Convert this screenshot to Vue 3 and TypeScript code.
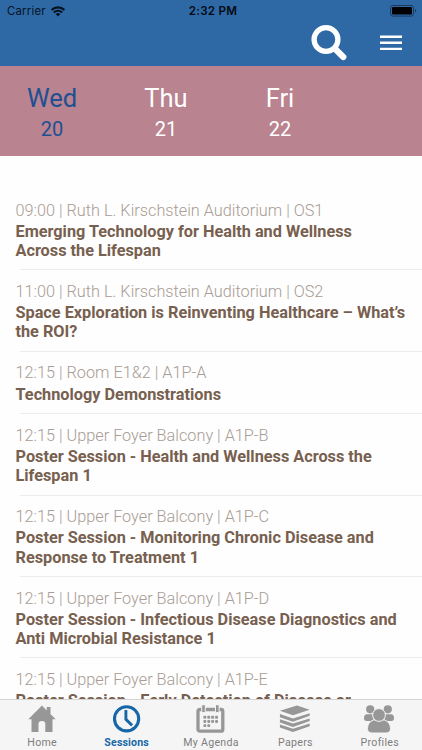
<script setup lang="ts">
interface Session {
  meta: string
  title: string[]
}

const days = [
  { name: 'Wed', date: 20, active: true },
  { name: 'Thu', date: 21, active: false },
  { name: 'Fri', date: 22, active: false },
]

const sessions: Session[] = [
  { meta: '09:00 | Ruth L. Kirschstein Auditorium | OS1', title: ['Emerging Technology for Health and Wellness', 'Across the Lifespan'] },
  { meta: '11:00 | Ruth L. Kirschstein Auditorium | OS2', title: ['Space Exploration is Reinventing Healthcare – What’s', 'the ROI?'] },
  { meta: '12:15 | Room E1&2 | A1P-A', title: ['Technology Demonstrations'] },
  { meta: '12:15 | Upper Foyer Balcony | A1P-B', title: ['Poster Session - Health and Wellness Across the', 'Lifespan 1'] },
  { meta: '12:15 | Upper Foyer Balcony | A1P-C', title: ['Poster Session - Monitoring Chronic Disease and', 'Response to Treatment 1'] },
  { meta: '12:15 | Upper Foyer Balcony | A1P-D', title: ['Poster Session - Infectious Disease Diagnostics and', 'Anti Microbial Resistance 1'] },
  { meta: '12:15 | Upper Foyer Balcony | A1P-E', title: ['Poster Session - Early Detection of Disease or'] },
]

const tabs = ['Home', 'Sessions', 'My Agenda', 'Papers', 'Profiles']
const activeTab = 'Sessions'

const calendarDots = [
  { y: 10.8, xs: [7.4, 11.3, 15.2, 19.1] },
  { y: 15, xs: [7.4, 11.3, 15.2, 19.1] },
  { y: 19.2, xs: [7.4, 11.3] },
]
</script>

<template>
  <div class="screen">
    <header class="header">
      <div class="status">
        <div class="carrier">
          <span>Carrier</span>
          <svg width="14" height="11" viewBox="0 0 14 11">
            <g fill="none" stroke="#06121f" stroke-width="2.1">
              <path d="M.7 3.9a9 9 0 0 1 12.6 0" />
              <path d="M2.9 6.4a5.8 5.8 0 0 1 8.2 0" />
            </g>
            <path d="M4.7 8.1a3.3 3.3 0 0 1 4.6 0L7 10.5z" fill="#06121f" />
          </svg>
        </div>
        <span class="time">2:32 PM</span>
        <svg class="battery" width="27" height="12" viewBox="0 0 27 12">
          <rect x=".5" y=".5" width="23" height="10.6" rx="2.4" fill="none" stroke="#173a5d" />
          <rect x="2" y="2" width="20" height="7.6" rx="1" fill="#000" />
          <path d="M25 4v3.6q1.3-.5 1.3-1.8T25 4z" fill="#173a5d" />
        </svg>
      </div>
      <div class="actions">
        <svg width="36" height="37" viewBox="0 0 36 37" fill="none" stroke="#fff">
          <circle cx="15" cy="15.5" r="11.9" stroke-width="5.3" />
          <path d="M24 24.7l8.300 8.300" stroke-width="6.200" stroke-linecap="round" />
        </svg>
        <svg class="menu" width="22" height="16" viewBox="0 0 22 16" fill="#fff">
          <path d="M0 .5h22v2.4H0zM0 6.6h22v2.4H0zM0 12.7h22v2.4H0z" />
        </svg>
      </div>
    </header>

    <nav class="days">
      <div v-for="d in days" :key="d.date" class="day" :class="{ active: d.active }">
        <span class="name">{{ d.name }}</span>
        <span class="date">{{ d.date }}</span>
      </div>
    </nav>

    <main class="list">
      <article v-for="s in sessions" :key="s.meta" class="session">
        <div class="meta">{{ s.meta }}</div>
        <div v-for="line in s.title" :key="line" class="title">{{ line }}</div>
      </article>
    </main>

    <footer class="tabs">
      <div v-for="t in tabs" :key="t" class="tab" :class="{ active: t === activeTab }">
        <svg v-if="t === 'Home'" width="30" height="28" viewBox="0 0 30 28" fill="currentColor">
          <path d="M15 .5L1.300 14.300h3.200v12.600h7v-8.100q0-2.700 3.400-2.700t3.400 2.700v8.100h7.200V14.300h3.200l-5.200-5.200V2h-3.800v3.400z" />
        </svg>
        <svg v-else-if="t === 'Sessions'" width="28" height="28" viewBox="0 0 28 28" fill="none" stroke="currentColor">
          <circle cx="13.6" cy="13.8" r="12.1" stroke-width="3.100" />
          <path d="M12.900 5v9.400l6.200 6" stroke-width="2.900" />
        </svg>
        <svg v-else-if="t === 'My Agenda'" width="29" height="28" viewBox="0 0 29 28">
          <rect x="2" y="4.500" width="24.800" height="21.700" rx="1.800" fill="none" stroke="currentColor" stroke-width="3.300" />
          <g stroke="#f6f5f5" stroke-width="1" fill="currentColor">
            <rect x="5.700" y="-.3" width="3.600" height="7.800" rx="1" />
            <rect x="19.500" y="-.3" width="3.600" height="7.800" rx="1" />
          </g>
          <g v-for="row in calendarDots" :key="row.y" fill="currentColor">
            <rect v-for="x in row.xs" :key="x" :x="x" :y="row.y" width="2.900" height="2.900" rx=".8" />
          </g>
        </svg>
        <svg v-else-if="t === 'Papers'" width="32" height="28" viewBox="0 0 32 28" fill="currentColor">
          <path d="M.9 5.800L18 .4l12.700 4.400L14 10.300z" />
          <path d="M.9 9.100L14 13.400l16.700-5.200v2.600L14 16.700.9 12.200zM.9 14.300L14 18.600l16.700-5.200V16L14 21.900.9 17.400zM.9 19.500L14 23.800l16.700-5.200v2.600L14 27.100.9 22.600z" />
        </svg>
        <svg v-else class="people" width="32" height="28" viewBox="0 0 32 28" fill="currentColor">
          <circle cx="7.200" cy="4.300" r="4.100" />
          <circle cx="24.800" cy="4.300" r="4.100" />
          <path d="M4 9.200h6.500v6.700H3.500q-2.500 0-2.500-2.700 0-4 3-4zM28 9.200h-6.500v6.700h7q2.500 0 2.500-2.700 0-4-3-4z" />
          <g stroke="#f6f5f5" stroke-width="1">
            <path d="M10.300 15h11.400q5.800 2.500 5.800 8.500 0 4.500-4.500 4.500H9q-4.500 0-4.500-4.500 0-6 5.800-8.500z" />
            <circle cx="16" cy="10" r="6.400" />
          </g>
        </svg>
        <span class="label">{{ t }}</span>
      </div>
    </footer>
  </div>
</template>

<style>
body {
  margin: 0;
}
</style>

<style scoped>
.screen {
  width: 422px;
  height: 750px;
  overflow: hidden;
  display: flex;
  flex-direction: column;
  background: #fefefe;
  font-family: Roboto, sans-serif;
}
.header {
  height: 66px;
  flex: none;
  box-sizing: border-box;
  background: #2e69a6;
}
.status {
  height: 22px;
  display: grid;
  grid-template-columns: 1fr auto 1fr;
  align-items: center;
  padding: 0 5px 0 7px;
  color: #06121f;
  font-family: Inter, sans-serif;
  font-size: 11.4px;
}
.carrier {
  display: flex;
  align-items: center;
  gap: 5px;
  letter-spacing: 0.2px;
}
.time {
  font-size: 11.6px;
  font-weight: 600;
  letter-spacing: 0.25px;
  padding-left: 2px;
  color: #030a12;
}
.battery {
  justify-self: end;
}
.actions {
  display: flex;
  justify-content: flex-end;
  align-items: center;
  gap: 33px;
  padding: 2px 20px 0 0;
}
.days {
  height: 90px;
  flex: none;
  display: flex;
  box-sizing: border-box;
  background: #b9838f;
  color: #fff;
}
.day {
  width: 114px;
  display: flex;
  flex-direction: column;
  align-items: center;
  padding-top: 17px;
}
.day:first-child {
  width: 104px;
  margin-right: 5px;
}
.active.day {
  color: #204f93;
}
.name {
  font-size: 25.5px;
  line-height: 30px;
}
.date {
  font-size: 20px;
  line-height: 24px;
  padding-top: 4px;
}
.list {
  flex: 1;
  min-height: 0;
  overflow: hidden;
  padding-top: 33px;
}
.session {
  padding: 10.5px 0 10.25px 15.5px;
  background: linear-gradient(#ececee, #ececee) 20px 100% / 402px 1px no-repeat;
  white-space: nowrap;
}
.meta {
  font-size: 16.27px;
  line-height: 22.2px;
  font-weight: 300;
  color: #a89c94;
}
.title {
  font-size: 16.28px;
  line-height: 19.25px;
  font-weight: 700;
  color: #77604f;
}
.tabs {
  height: 51px;
  flex: none;
  display: grid;
  grid-template-columns: repeat(5, 1fr);
  box-sizing: border-box;
  border-top: 1px solid #d5d4d4;
  background: #f6f5f5;
  color: #979797;
}
.tab {
  display: flex;
  flex-direction: column;
  align-items: center;
  padding-top: 5px;
}
.active.tab {
  color: #1767a8;
}
.people {
  margin-right: 2px;
}
.label {
  font-size: 10.6px;
  line-height: 13px;
  letter-spacing: 0.3px;
  padding-top: 3px;
  font-weight: 400;
  color: #7d7d7d;
}
.active .label {
  color: #1767a8;
  font-weight: 700;
  letter-spacing: 0.15px;
}
</style>
